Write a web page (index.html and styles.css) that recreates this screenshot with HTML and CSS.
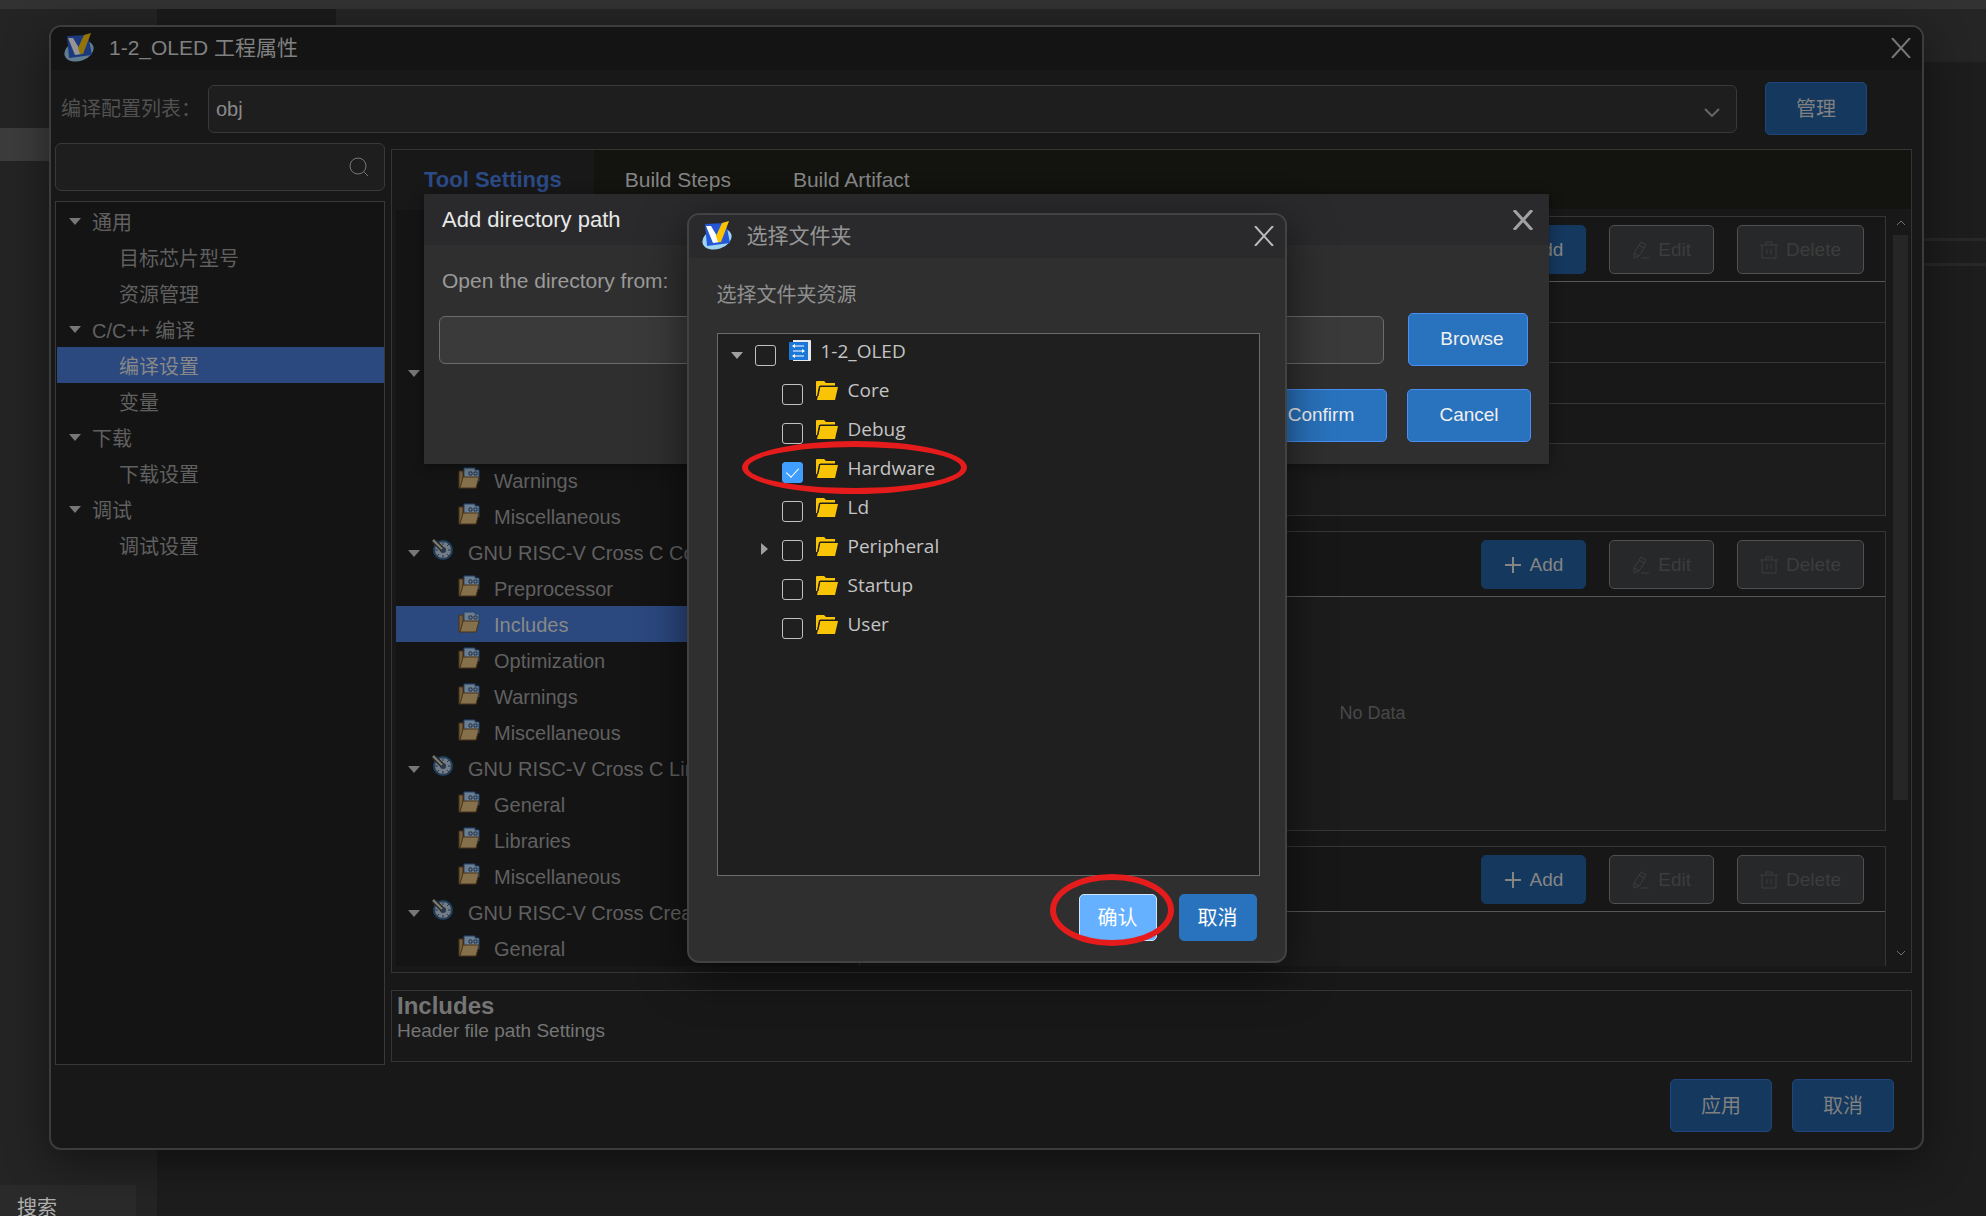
FILE: index.html
```html
<!DOCTYPE html>
<html lang="zh-CN">
<head>
    <meta charset="UTF-8">
    <meta name="viewport" content="width=device-width, initial-scale=1.0">
    <title>1-2_OLED 工程属性</title>
    <link rel="stylesheet" href="styles.css">
</head>
<body>
    <svg class="sprite" aria-hidden="true">
        <symbol id="logo" viewBox="0 0 30 30">
            <ellipse cx="15" cy="18" rx="15" ry="10" transform="rotate(-18 15 18)" fill="#9fd3f5"/>
            <path d="M3 3L24 2L28 22L5 25Z" fill="#2458d6"/>
            <path d="M4 5L9 5L15 15L18 21L11 22Z" fill="#fff"/>
            <path d="M20 2L27 0L19 21L16 21L14 15Z" fill="#fcc400"/>
        </symbol>
        <symbol id="close" viewBox="0 0 20 20">
            <path d="M1 0L19 20M19 0L1 20" fill="none" stroke="currentColor"/>
        </symbol>
        <symbol id="folder" viewBox="0 0 22 19">
            <path d="M0 1Q0 0 1 0H8L10 2H19V5H3L1 15H0Z" fill="#f9c406"/>
            <path d="M4 6H22L19 19H1Z" fill="#f9c406"/>
            <path d="M2 15L4 5H20" fill="none" stroke="#1f1f1f"/>
        </symbol>
        <symbol id="project" viewBox="0 0 22 22">
            <path d="M4 0H21Q22 0 22 1V20Q22 21 21 21H4Z" fill="#e8eaee"/>
            <path d="M1 2H19V20H1Q0 20 0 19V3Q0 2 1 2Z" fill="#1c78d8"/>
            <path d="M4 6H15M4 11H15M4 16H15" fill="none" stroke="#fff"/>
            <path d="M6 4L3 6L6 8ZM13 9L16 11L13 13ZM6 14L3 16L6 18Z" fill="#fff"/>
        </symbol>
        <symbol id="toolset" viewBox="0 0 22 22">
            <path d="M6 4V1H17V3H21V14H6Z" fill="#6f7e8c" stroke="#1c4677"/>
            <path d="M11 5H14V8H11ZM16 5H19V8H16Z" fill="none" stroke="#1e344e"/>
            <path d="M1 4H5V10L3 21H1Z" fill="#75603a" stroke="#4b331a"/>
            <path d="M5 10H21L18 21H2Z" fill="#84704a" stroke="#4b331a"/>
        </symbol>
        <symbol id="gear" viewBox="0 0 22 22">
            <circle cx="11" cy="11" r="9" fill="#737b85" stroke="#20405e" stroke-width="2"/>
            <path d="M11 3V6M11 16V19M3 11H6M16 11H19M5 17L7 15M15 15L17 17M15 7L17 5" stroke="#26384a" stroke-width="1"/>
            <circle cx="11" cy="11" r="3" fill="#26384a"/>
            <path d="M1 1L10 10" stroke="#27292b" stroke-width="5"/>
            <path d="M1 1L10 10" stroke="#827f70" stroke-width="2"/>
        </symbol>
        <symbol id="plus" viewBox="0 0 18 18">
            <path d="M9 1V17M1 9H17" stroke="currentColor" stroke-width="2"/>
        </symbol>
        <symbol id="pencil" viewBox="0 0 18 18">
            <path d="M9 1L14 4L7 15L2 17L2 12ZM7 4L12 7M2 12L7 15M9 17H17" fill="none" stroke="currentColor" stroke-width="1"/>
        </symbol>
        <symbol id="trash" viewBox="0 0 18 18">
            <path d="M0 4H18M6 4V1H12V4M2 4V17H16V4M7 8V13M11 8V13" fill="none" stroke="currentColor" stroke-width="1"/>
        </symbol>
    </svg>

    <!-- IDE shell behind the windows -->
    <div class="ide">
        <div class="ide-menu"></div>
        <div class="ide-side"><div class="ide-side-item"></div></div>
        <div class="ide-main">
            <div class="ide-tabs"><div class="ide-tab"></div></div>
            <div class="ide-split"></div>
        </div>
        <div class="ide-tip"><span>搜索</span></div>
    </div>

    <main class="window">
        <header class="title-bar">
            <svg class="logo"><use href="#logo"/></svg>
            <h1>1-2_OLED 工程属性</h1>
            <button class="close" aria-label="Close"><svg><use href="#close"/></svg></button>
        </header>

        <div class="config-row">
            <label for="config">编译配置列表：</label>
            <div class="select-wrap">
                <select id="config"><option>obj</option></select>
                <svg class="chevron" viewBox="0 0 16 9"><path d="M1 1L8 8L15 1" fill="none" stroke="currentColor"/></svg>
            </div>
            <button class="btn dim">管理</button>
        </div>

        <div class="columns">
            <aside class="sidebar">
                <div class="search">
                    <input type="text" aria-label="搜索">
                    <svg viewBox="0 0 20 20"><circle cx="9" cy="9" r="8" fill="none" stroke="currentColor"/><path d="M15 15L19 19" stroke="currentColor"/></svg>
                </div>
                <ul class="tree nav-tree">
                    <li class="group"><i class="arrow"></i>通用</li>
                    <li>目标芯片型号</li>
                    <li>资源管理</li>
                    <li class="group"><i class="arrow"></i>C/C++ 编译</li>
                    <li class="selected">编译设置</li>
                    <li>变量</li>
                    <li class="group"><i class="arrow"></i>下载</li>
                    <li>下载设置</li>
                    <li class="group"><i class="arrow"></i>调试</li>
                    <li>调试设置</li>
                </ul>
            </aside>

            <section class="settings">
                <div class="panel">
                    <nav class="tabs">
                        <button class="tab active">Tool Settings</button>
                        <button class="tab">Build Steps</button>
                        <button class="tab">Build Artifact</button>
                    </nav>
                    <div class="tool-content">
                        <ul class="tree tool-tree">
                            <li><svg><use href="#toolset"/></svg></li>
                            <li><svg><use href="#toolset"/></svg></li>
                            <li><svg><use href="#toolset"/></svg></li>
                            <li><svg><use href="#toolset"/></svg></li>
                            <li class="group"><i class="arrow"></i><svg><use href="#gear"/></svg></li>
                            <li><svg><use href="#toolset"/></svg></li>
                            <li><svg><use href="#toolset"/></svg></li>
                            <li><svg><use href="#toolset"/></svg>Warnings</li>
                            <li><svg><use href="#toolset"/></svg>Miscellaneous</li>
                            <li class="group"><i class="arrow"></i><svg><use href="#gear"/></svg>GNU RISC-V Cross C Compiler</li>
                            <li><svg><use href="#toolset"/></svg>Preprocessor</li>
                            <li class="selected"><svg><use href="#toolset"/></svg>Includes</li>
                            <li><svg><use href="#toolset"/></svg>Optimization</li>
                            <li><svg><use href="#toolset"/></svg>Warnings</li>
                            <li><svg><use href="#toolset"/></svg>Miscellaneous</li>
                            <li class="group"><i class="arrow"></i><svg><use href="#gear"/></svg>GNU RISC-V Cross C Linker</li>
                            <li><svg><use href="#toolset"/></svg>General</li>
                            <li><svg><use href="#toolset"/></svg>Libraries</li>
                            <li><svg><use href="#toolset"/></svg>Miscellaneous</li>
                            <li class="group"><i class="arrow"></i><svg><use href="#gear"/></svg>GNU RISC-V Cross Create Flash Image</li>
                            <li><svg><use href="#toolset"/></svg>General</li>
                        </ul>

                        <div class="pane">
                            <div class="list-box">
                                <div class="list-head">
                                    <button class="tool-btn add"><svg><use href="#plus"/></svg>Add</button>
                                    <button class="tool-btn" disabled><svg><use href="#pencil"/></svg>Edit</button>
                                    <button class="tool-btn" disabled><svg><use href="#trash"/></svg>Delete</button>
                                </div>
                                <div class="list-rows"><div></div><div></div><div></div><div></div></div>
                            </div>
                            <div class="list-box">
                                <div class="list-head">
                                    <button class="tool-btn add"><svg><use href="#plus"/></svg>Add</button>
                                    <button class="tool-btn" disabled><svg><use href="#pencil"/></svg>Edit</button>
                                    <button class="tool-btn" disabled><svg><use href="#trash"/></svg>Delete</button>
                                </div>
                                <p class="no-data">No Data</p>
                            </div>
                            <div class="list-box">
                                <div class="list-head">
                                    <button class="tool-btn add"><svg><use href="#plus"/></svg>Add</button>
                                    <button class="tool-btn" disabled><svg><use href="#pencil"/></svg>Edit</button>
                                    <button class="tool-btn" disabled><svg><use href="#trash"/></svg>Delete</button>
                                </div>
                            </div>
                        </div>

                        <div class="scrollbar">
                            <svg viewBox="0 0 10 6"><path d="M1 5L5 1L9 5" fill="none" stroke="currentColor"/></svg>
                            <div class="track"><div class="thumb"></div></div>
                            <svg viewBox="0 0 10 6"><path d="M1 1L5 5L9 1" fill="none" stroke="currentColor"/></svg>
                        </div>
                    </div>
                </div>
                <div class="description">
                    <h2>Includes</h2>
                    <p>Header file path Settings</p>
                </div>
            </section>
        </div>

        <footer class="actions">
            <button class="btn dim">应用</button>
            <button class="btn dim">取消</button>
        </footer>

        <div class="path-dialog" role="dialog" aria-labelledby="path-title">
            <header>
                <h2 id="path-title">Add directory path</h2>
                <button class="close" aria-label="Close"><svg><use href="#close"/></svg></button>
            </header>
            <div class="path-body">
                <label for="path">Open the directory from:</label>
                <div class="path-row">
                    <input type="text" id="path">
                    <button class="btn browse">Browse</button>
                </div>
                <div class="path-actions">
                    <button class="btn confirm">Confirm</button>
                    <button class="btn cancel">Cancel</button>
                </div>
            </div>
        </div>

        <div class="folder-dialog" role="dialog" aria-labelledby="folder-title">
            <header class="title-bar">
                <svg class="logo"><use href="#logo"/></svg>
                <h2 id="folder-title">选择文件夹</h2>
                <button class="close" aria-label="Close"><svg><use href="#close"/></svg></button>
            </header>
            <div class="folder-body">
                <p>选择文件夹资源</p>
                <ul class="folder-tree">
                    <li class="root"><i class="arrow"></i><input type="checkbox" id="f0"><label for="f0"><svg><use href="#project"/></svg>1-2_OLED</label></li>
                    <li><input type="checkbox" id="f1"><label for="f1"><svg><use href="#folder"/></svg>Core</label></li>
                    <li><input type="checkbox" id="f2"><label for="f2"><svg><use href="#folder"/></svg>Debug</label></li>
                    <li class="marked"><input type="checkbox" id="f3" checked><label for="f3"><svg><use href="#folder"/></svg>Hardware</label></li>
                    <li><input type="checkbox" id="f4"><label for="f4"><svg><use href="#folder"/></svg>Ld</label></li>
                    <li><i class="arrow closed"></i><input type="checkbox" id="f5"><label for="f5"><svg><use href="#folder"/></svg>Peripheral</label></li>
                    <li><input type="checkbox" id="f6"><label for="f6"><svg><use href="#folder"/></svg>Startup</label></li>
                    <li><input type="checkbox" id="f7"><label for="f7"><svg><use href="#folder"/></svg>User</label></li>
                </ul>
                <div class="folder-actions">
                    <span class="marked-btn"><button class="small-btn primary">确认</button></span>
                    <button class="small-btn">取消</button>
                </div>
            </div>
        </div>
    </main>
</body>
</html>
```
FILE: styles.css
```css
*, *::before, *::after {
    box-sizing: border-box;
    margin: 0;
    padding: 0;
}
body {
    font-family: "Liberation Sans", "Noto Sans CJK SC", sans-serif;
    font-size: 20px;
    background: #1c1c1c;
    color: #606060;
    min-height: 100vh;
    overflow: hidden;
}
button, input, select {
    font: inherit;
    color: inherit;
}
button {
    cursor: pointer;
}
h1, h2 {
    font-weight: normal;
}
ul {
    list-style: none;
}
.sprite {
    position: absolute;
    width: 0;
    height: 0;
}

/* shell */
.ide {
    height: 100vh;
    display: grid;
    grid-template-columns: 157px 1fr;
    grid-template-rows: 9px 1fr;
}
.ide-menu {
    grid-column: 1 / 3;
    background: #323232;
}
.ide-side {
    background: #242424;
    padding-top: 119px;
}
.ide-side-item {
    height: 33px;
    background: #3c3c3c;
}
.ide-main {
    background: #1d1d1d;
}
.ide-tabs {
    height: 53px;
    background: #252525;
}
.ide-tab {
    width: 179px;
    height: 53px;
    background: #1b1b1b;
}
.ide-split {
    margin-top: 176px;
    height: 28px;
    border-top: 3px solid #282828;
    border-bottom: 3px solid #282828;
}
.ide-tip {
    position: absolute;
    left: 0;
    bottom: 0;
    width: 136px;
    height: 31px;
    background: #2a2a2a;
    padding: 8px 17px 0;
    color: #b0b0b0;
    line-height: 30px;
    overflow: hidden;
}

/* windows */
.window {
    position: absolute;
    top: 25px;
    left: 49px;
    right: 62px;
    background: #181818;
    border: 2px solid #3c3c3c;
    border-radius: 12px;
    box-shadow: 0 12px 45px rgba(0, 0, 0, 0.45);
}
.title-bar {
    display: flex;
    align-items: center;
    gap: 15px;
    height: 43px;
    padding: 0 11px 2px 13px;
    background: #141414;
    border-radius: 10px 10px 0 0;
    color: #808080;
    font-size: 21px;
}
.title-bar h1, .title-bar h2 {
    flex: 1;
    padding-bottom: 3px;
    font-size: 21px;
}
.logo {
    width: 30px;
    height: 30px;
    opacity: 0.55;
}
.close {
    width: 20px;
    height: 20px;
    border: none;
    background: none;
    color: #777;
}
.close svg {
    display: block;
    width: 20px;
    height: 20px;
    stroke-width: 2px;
}
.config-row {
    display: flex;
    align-items: center;
    padding: 12px 55px 8px 10px;
}
.config-row label {
    width: 147px;
    padding-bottom: 3px;
    color: #515151;
    white-space: nowrap;
}
.select-wrap {
    position: relative;
    flex: 1;
    margin-right: 28px;
}
.select-wrap select {
    display: block;
    appearance: none;
    width: 100%;
    height: 48px;
    padding: 0 7px;
    background: #1e1e1e;
    border: 1px solid #393939;
    border-radius: 6px;
    color: #8a8a8a;
}
.chevron {
    position: absolute;
    right: 17px;
    top: 23px;
    width: 16px;
    height: 9px;
    stroke-width: 2px;
    color: #666;
}
.btn {
    height: 53px;
    background: #2972bd;
    border: 1px solid #4a8ff5;
    border-radius: 5px;
    color: #f0f0f0;
}
.btn.dim {
    width: 102px;
    padding-bottom: 3px;
    background: #15385f;
    border-color: #1f467c;
    color: #808080;
}
.columns {
    display: grid;
    grid-template-columns: 330px 1fr;
    gap: 6px;
    padding: 0 10px 0 4px;
}
.sidebar {
    display: flex;
    flex-direction: column;
    gap: 10px;
}
.search {
    position: relative;
}
.search input {
    display: block;
    width: 100%;
    height: 48px;
    padding: 0 48px 0 10px;
    background: #1e1e1e;
    border: 1px solid #393939;
    border-radius: 6px;
}
.search svg {
    position: absolute;
    right: 16px;
    top: 14px;
    width: 20px;
    height: 20px;
    stroke-width: 1px;
    color: #777;
}

/* trees */
.tree {
    background: #141414;
}
.tree li {
    display: flex;
    align-items: center;
    height: 36px;
    padding-top: 2px;
    white-space: nowrap;
}
.tree li.selected {
    background: #2b487f;
    color: #888;
}
.arrow {
    border-top: 7px solid #777;
    border-left: 6px solid transparent;
    border-right: 6px solid transparent;
}
.nav-tree {
    flex: 1;
    border: 1px solid #393939;
    padding: 1px 0 1px 1px;
}
.nav-tree li {
    padding: 0 0 0 62px;
}
.nav-tree .group {
    gap: 11px;
    padding-left: 12px;
}
.tool-tree {
    overflow: hidden;
}
.tool-tree li {
    gap: 14px;
    padding-left: 62px;
}
.tool-tree .group {
    padding-left: 12px;
}
.tool-tree .group .arrow {
    margin-right: -2px;
}
.tree svg {
    width: 22px;
    height: 22px;
    margin-bottom: 6px;
}

/* settings panel */
.settings {
    display: flex;
    flex-direction: column;
    gap: 17px;
    padding: 6px 0 3px;
}
.panel {
    border: 1px solid #343434;
}
.tabs {
    display: flex;
    height: 59px;
    background: #131310;
}
.tab {
    padding: 0 31px;
    border: none;
    background: none;
    color: #858585;
    font-size: 21px;
}
.tab.active {
    padding: 0 32px;
    background: #181818;
    color: #2b4a86;
    font-size: 22px;
    font-weight: bold;
}
.tool-content {
    display: grid;
    grid-template-columns: 444px 1fr 15px;
    padding: 1px 3px 6px 4px;
}
.pane {
    contain: size;
    overflow: hidden;
    display: flex;
    flex-direction: column;
    gap: 15px;
    padding-top: 6px;
    margin: 0 7px 0 19px;
}
.list-box {
    flex: none;
    display: flex;
    flex-direction: column;
    height: 300px;
    background: #1c1c1c;
    border: 1px solid #363636;
}
.list-head {
    display: flex;
    justify-content: flex-end;
    gap: 23px;
    padding: 8px 21px 7px;
    background: #171717;
    border-bottom: 1px solid #5a5656;
}
.tool-btn {
    display: flex;
    align-items: center;
    gap: 8px;
    height: 49px;
    padding: 0 22px;
    background: #27282a;
    border: 1px solid #505050;
    border-radius: 5px;
    color: #3c3d3c;
    font-size: 19px;
}
.tool-btn svg {
    width: 18px;
    height: 18px;
}
.tool-btn.add {
    background: #15385f;
    border-color: #15385f;
    color: #858585;
}
.list-rows {
    display: flex;
    flex-direction: column;
    height: 162px;
}
.list-rows div {
    flex: 1;
    background: #181818;
    border-bottom: 1px solid #363636;
}
.no-data {
    margin: auto;
    font-size: 18px;
    color: #484848;
}
.scrollbar {
    display: flex;
    flex-direction: column;
    align-items: center;
    padding: 10px 0;
    color: #707070;
}
.scrollbar svg {
    width: 10px;
    height: 6px;
}
.track {
    flex: 1;
    width: 100%;
    padding: 9px 0;
}
.thumb {
    height: 80%;
    background: #262626;
}
.description {
    min-height: 72px;
    padding: 2px 5px;
    border: 1px solid #343434;
    color: #757575;
    font-size: 19px;
    line-height: 24px;
}
.description h2 {
    font-size: 24px;
    line-height: 26px;
    font-weight: bold;
}
.actions {
    display: flex;
    justify-content: flex-end;
    gap: 20px;
    padding: 14px 28px 16px;
}

/* add directory dialog */
.path-dialog {
    position: absolute;
    top: 167px;
    left: 0;
    right: 0;
    margin: 0 auto;
    width: 1125px;
    background: #2f2f2f;
    box-shadow: 0 2px 12px rgba(0, 0, 0, 0.4);
}
.path-dialog header {
    display: flex;
    align-items: center;
    justify-content: space-between;
    height: 51px;
    padding: 0 16px 0 18px;
    background: #2a2a2c;
}
.path-dialog h2 {
    font-size: 22px;
    color: #e8e8e8;
}
.path-dialog .close {
    color: #a0a0a4;
}
.path-dialog .close svg {
    stroke-width: 3px;
}
.path-body {
    padding: 24px 18px 22px 15px;
}
.path-body label {
    display: block;
    padding-left: 3px;
    margin-bottom: 20px;
    font-size: 21px;
    line-height: 24px;
    color: #9a9a9a;
}
.path-row {
    display: flex;
    align-items: center;
    gap: 24px;
    padding-right: 3px;
}
.path-row input {
    flex: 1;
    height: 48px;
    padding: 0 10px;
    background: #3a3a3a;
    border: 1px solid #6c6c6c;
    border-radius: 6px;
}
.path-actions {
    display: flex;
    justify-content: flex-end;
    gap: 20px;
    margin-top: 23px;
}
.path-body .btn {
    padding-bottom: 2px;
    font-size: 19px;
}
.browse {
    width: 120px;
    padding-left: 8px;
}
.confirm {
    width: 132px;
}
.cancel {
    width: 124px;
}

/* folder picker */
.folder-dialog {
    position: absolute;
    top: 186px;
    left: 0;
    right: 0;
    margin: 0 auto;
    width: 600px;
    background: #2f2f2f;
    border: 2px solid #424242;
    border-radius: 12px;
    box-shadow: 0 12px 45px rgba(0, 0, 0, 0.55);
}
.folder-dialog .title-bar {
    background: #2a2a2c;
    color: #959595;
}
.folder-dialog .logo {
    opacity: 1;
}
.folder-dialog .close {
    color: #bbb;
}
.folder-body {
    padding: 22px 25px 20px 28px;
}
.folder-body p {
    line-height: 30px;
    color: #909090;
}
.folder-tree {
    min-height: 543px;
    margin-top: 23px;
    border: 1px solid #6b6b6b;
    background: #1f1f1f;
    color: #c4c4c4;
    font-family: "Open Sans", sans-serif;
    font-size: 19px;
}
.folder-tree li {
    position: relative;
    display: flex;
    align-items: center;
    height: 39px;
    padding-left: 64px;
}
.folder-tree .root {
    padding-left: 37px;
}
.folder-tree .arrow {
    position: absolute;
    left: 13px;
    top: 18px;
    border-top-color: #a0a0a0;
}
.folder-tree .arrow.closed {
    left: 43px;
    top: 14px;
    border-top: 6px solid transparent;
    border-bottom: 6px solid transparent;
    border-left: 7px solid #a0a0a0;
    border-right: none;
}
.folder-tree input {
    appearance: none;
    position: relative;
    width: 21px;
    height: 21px;
    margin: 4px 13px 0 0;
    border: 1px solid #c0c0c0;
    border-radius: 3px;
}
.folder-tree input:checked {
    background: #409eff;
    border-color: #409eff;
}
.folder-tree input:checked::after {
    content: "";
    position: absolute;
    left: 6px;
    top: 2px;
    width: 7px;
    height: 12px;
    border-right: 1px solid #fff;
    border-bottom: 1px solid #fff;
    transform: rotate(42deg);
}
.folder-tree label {
    display: flex;
    align-items: center;
    gap: 10px;
    height: 34px;
    margin-bottom: 5px;
}
.folder-tree svg {
    width: 22px;
    height: 19px;
}
.folder-tree .root svg {
    height: 22px;
}
.folder-actions {
    display: flex;
    justify-content: flex-end;
    gap: 22px;
    margin-top: 18px;
    padding-right: 3px;
}
.small-btn {
    display: block;
    width: 78px;
    height: 47px;
    padding-bottom: 2px;
    background: #2972bd;
    border: 1px solid #2972bd;
    border-radius: 5px;
    color: #fff;
}
.small-btn.primary {
    background: #66b1ff;
    border-color: #d0e6ff;
}

/* red rings round the two steps */
.marked::after, .marked-btn::after {
    content: "";
    position: absolute;
    border: 6px solid #e61c1c;
    border-radius: 50%;
    pointer-events: none;
}
.marked::after {
    left: 24px;
    top: -10px;
    width: 225px;
    height: 53px;
}
.marked-btn {
    position: relative;
}
.marked-btn::after {
    left: -29px;
    top: -20px;
    width: 124px;
    height: 72px;
}
```
